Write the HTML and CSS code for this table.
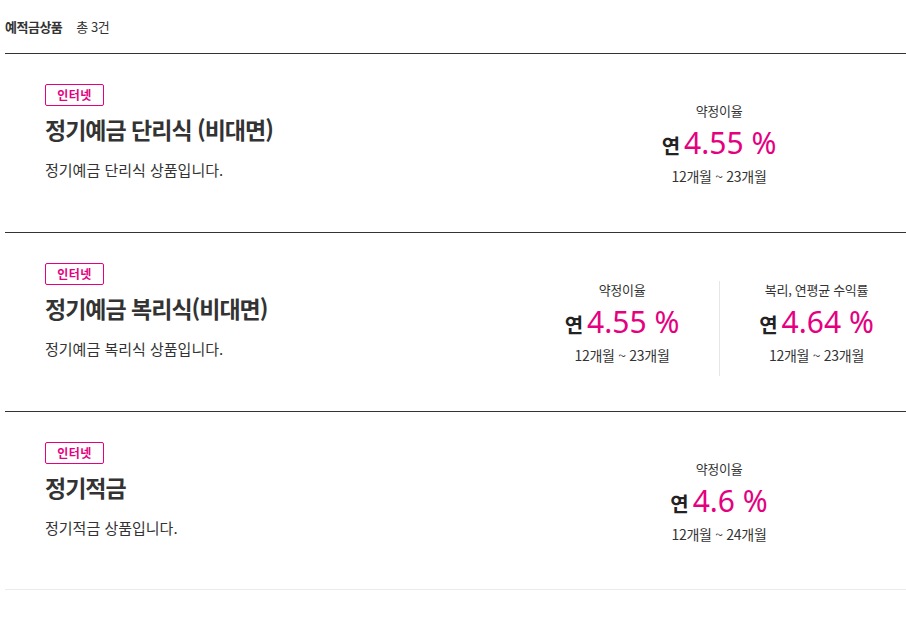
FILE: index.html
```html
<!DOCTYPE html>
<html lang="ko">
<head>
<meta charset="utf-8">
<link rel="stylesheet" href="styles.css">
</head>
<body>
<div class="wrap">
  <div class="head">
    <span class="head-title">예적금상품</span>
    <span class="head-count">총 3건</span>
  </div>
  <ul class="list">
    <li class="item">
      <div class="info">
        <span class="badge">인터넷</span>
        <h2 class="name">정기예금 단리식 (비대면)</h2>
        <p class="desc">정기예금 단리식 상품입니다.</p>
      </div>
      <div class="rates">
        <div class="rate">
          <div class="rate-label">약정이율</div>
          <div class="rate-value"><span class="yr">연</span><span class="num">4.55 %</span></div>
          <div class="rate-term">12개월 ~ 23개월</div>
        </div>
      </div>
    </li>
    <li class="item">
      <div class="info">
        <span class="badge">인터넷</span>
        <h2 class="name">정기예금 복리식(비대면)</h2>
        <p class="desc">정기예금 복리식 상품입니다.</p>
      </div>
      <div class="rates">
        <div class="rate">
          <div class="rate-label">약정이율</div>
          <div class="rate-value"><span class="yr">연</span><span class="num">4.55 %</span></div>
          <div class="rate-term">12개월 ~ 23개월</div>
        </div>
        <div class="rate divided">
          <div class="rate-label">복리, 연평균 수익률</div>
          <div class="rate-value"><span class="yr">연</span><span class="num">4.64 %</span></div>
          <div class="rate-term">12개월 ~ 23개월</div>
        </div>
      </div>
    </li>
    <li class="item last">
      <div class="info">
        <span class="badge">인터넷</span>
        <h2 class="name">정기적금</h2>
        <p class="desc">정기적금 상품입니다.</p>
      </div>
      <div class="rates">
        <div class="rate">
          <div class="rate-label">약정이율</div>
          <div class="rate-value"><span class="yr">연</span><span class="num">4.6 %</span></div>
          <div class="rate-term">12개월 ~ 24개월</div>
        </div>
      </div>
    </li>
  </ul>
</div>
</body>
</html>
```
FILE: styles.css
```css
* { box-sizing: border-box; }
html, body { margin: 0; padding: 0; background: #fff; }
body {
  font-family: "Noto Sans CJK KR", "Noto Sans", sans-serif;
  color: #333;
}
.wrap { padding-left: 5px; }
.head {
  height: 54px;
  border-bottom: 1px solid #333;
  display: flex;
  align-items: center;
  font-size: 13px;
  letter-spacing: -0.5px;
}
.head-title { font-weight: 700; color: #333; }
.head-count { margin-left: 14px; color: #333; }
.list { list-style: none; margin: 0; padding: 0; }
.item {
  height: 179px;
  border-bottom: 1px solid #333;
  display: flex;
  align-items: flex-start;
  padding: 30px 0 0 40px;
}
.item.last { border-bottom-color: #eaeaea; height: 178px; }
.info {
  flex: 1;
  display: flex;
  flex-direction: column;
  align-items: flex-start;
}
.badge {
  display: block;
  width: 59px;
  height: 22px;
  border: 1px solid #e4007f;
  border-radius: 2px;
  color: #e4007f;
  font-size: 12px;
  font-weight: 700;
  text-align: center;
  line-height: 20px;
  letter-spacing: 0.5px;
}
.name {
  margin: 8px 0 0;
  font-size: 23px;
  font-weight: 700;
  line-height: 30px;
  letter-spacing: -1px;
  color: #333;
}
.desc {
  margin: 16px 0 0;
  font-size: 15px;
  line-height: 20px;
  color: #333;
}
.rates {
  width: 374px;
  display: flex;
  justify-content: center;
  padding-top: 18px;
}
.rate {
  width: 180px;
  text-align: center;
  padding-bottom: 12px;
}
.rate.divided {
  width: 187px;
  margin-left: 7px;
  border-left: 1px solid #e6e6e6;
  padding-left: 7px;
}
.rate-label {
  font-size: 13px;
  line-height: 18px;
  letter-spacing: -0.3px;
  color: #333;
}
.rate-value {
  display: flex;
  justify-content: center;
  align-items: baseline;
  height: 42px;
  line-height: 42px;
  margin-top: 2px;
}
.yr {
  font-size: 20px;
  font-weight: 700;
  color: #222;
  margin-right: 4px;
}
.num {
  font-size: 30px;
  color: #e4007f;
  font-family: "Noto Sans", "Noto Sans CJK KR", sans-serif;
}
.rate-term {
  font-size: 14px;
  line-height: 18px;
  margin-top: 3px;
  letter-spacing: -0.3px;
  color: #333;
}
```
